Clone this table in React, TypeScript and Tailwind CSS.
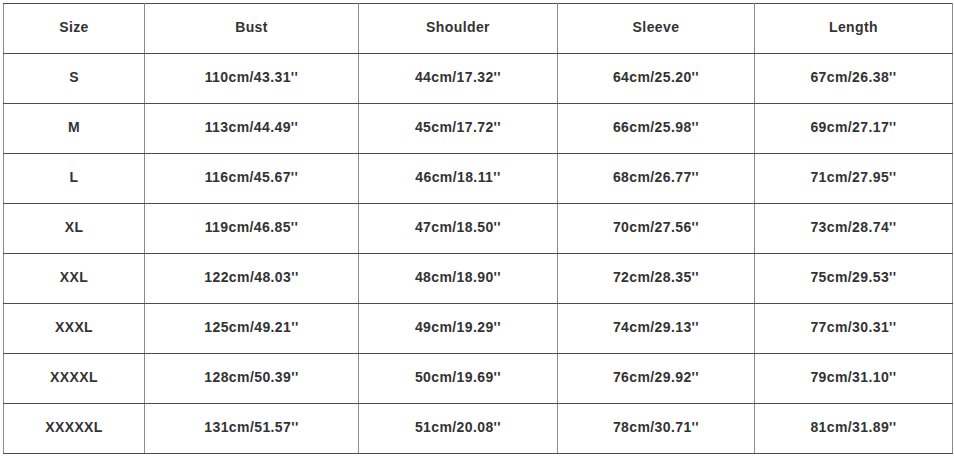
const headers = ["Size", "Bust", "Shoulder", "Sleeve", "Length"];

const rows = [
  ["S", "110cm/43.31''", "44cm/17.32''", "64cm/25.20''", "67cm/26.38''"],
  ["M", "113cm/44.49''", "45cm/17.72''", "66cm/25.98''", "69cm/27.17''"],
  ["L", "116cm/45.67''", "46cm/18.11''", "68cm/26.77''", "71cm/27.95''"],
  ["XL", "119cm/46.85''", "47cm/18.50''", "70cm/27.56''", "73cm/28.74''"],
  ["XXL", "122cm/48.03''", "48cm/18.90''", "72cm/28.35''", "75cm/29.53''"],
  ["XXXL", "125cm/49.21''", "49cm/19.29''", "74cm/29.13''", "77cm/30.31''"],
  ["XXXXL", "128cm/50.39''", "50cm/19.69''", "76cm/29.92''", "79cm/31.10''"],
  ["XXXXXL", "131cm/51.57''", "51cm/20.08''", "78cm/30.71''", "81cm/31.89''"],
];

const colWidths = ["w-[141px]", "w-[214px]", "w-[199px]", "w-[197px]", "w-[198px]"];

const App = () => {
  return (
    <div className="w-[954px] h-[456px] bg-white p-[3px] font-['Liberation_Sans',Arial,sans-serif] text-[14px] font-bold tracking-[0.4px] text-[#333]">
      <table className="table-fixed border-collapse w-[949px]">
        <colgroup>
          {colWidths.map((w, i) => (
            <col key={i} className={w} />
          ))}
        </colgroup>
        <thead>
          <tr className="h-[50px]">
            {headers.map((h) => (
              <th
                key={h}
                className="border border-x-[#8c8c8c] border-y-[#4d4d4d] pb-[2px] text-center font-bold"
              >
                {h}
              </th>
            ))}
          </tr>
        </thead>
        <tbody>
          {rows.map((row, r) => (
            <tr key={r} className="h-[50px]">
              {row.map((cell, c) => (
                <td
                  key={c}
                  className="border border-x-[#8c8c8c] border-y-[#4d4d4d] pb-[2px] text-center"
                >
                  {cell}
                </td>
              ))}
            </tr>
          ))}
        </tbody>
      </table>
    </div>
  );
};

export default App;
